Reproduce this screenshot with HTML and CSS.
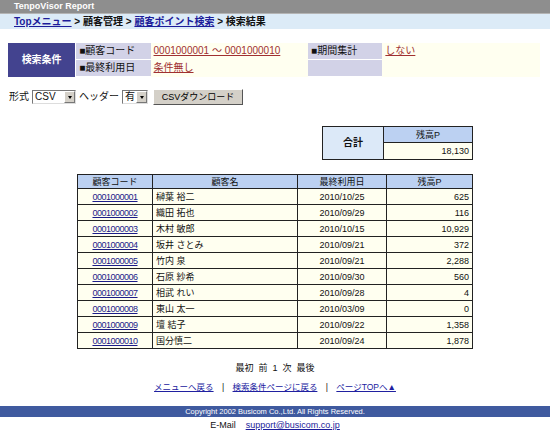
FILE: index.html
```html
<!DOCTYPE html>
<html lang="ja">

<head>
    <meta charset="UTF-8">
    <title>TenpoVisor Report - 検索結果</title>
    <link rel="stylesheet" href="styles.css">
</head>

<body>
    <div class="app-title">TenpoVisor Report</div>
    <div class="crumbs">
        <a href="#">Topメニュー</a> &gt; 顧客管理 &gt; <a href="#">顧客ポイント検索</a> &gt; 検索結果
    </div>

    <div class="page">
        <!-- search condition -->
        <table class="cond">
            <tr>
                <th rowspan="2" class="cond-head">検索条件</th>
                <td class="cond-label">■顧客コード</td>
                <td class="cond-value"><a href="#">0001000001 ～ 0001000010</a></td>
                <td class="cond-label">■期間集計</td>
                <td class="cond-value"><a href="#">しない</a></td>
            </tr>
            <tr>
                <td class="cond-label">■最終利用日</td>
                <td class="cond-value"><a href="#">条件無し</a></td>
                <td class="cond-label"></td>
                <td class="cond-value"></td>
            </tr>
        </table>

        <form class="export">
            <span>形式</span>
            <span class="fake-select sel-format">CSV<i class="arrow"></i></span>
            <span>ヘッダー</span>
            <span class="fake-select sel-header">有<i class="arrow"></i></span>
            <button type="button" class="csv-btn">CSVダウンロード</button>
        </form>

        <div class="tables">
            <table class="grid total">
                <tr>
                    <th rowspan="2" class="total-head">合計</th>
                    <th class="col-pt">残高P</th>
                </tr>
                <tr>
                    <td class="num">18,130</td>
                </tr>
            </table>

            <table class="grid list">
                <tr>
                    <th class="col-code">顧客コード</th>
                    <th class="col-name">顧客名</th>
                    <th class="col-date">最終利用日</th>
                    <th class="col-pt">残高P</th>
                </tr>
                <tr><td class="code"><a href="#">0001000001</a></td><td>榊葉 裕二</td><td class="date">2010/10/25</td><td class="num">625</td></tr>
                <tr><td class="code"><a href="#">0001000002</a></td><td>織田 拓也</td><td class="date">2010/09/29</td><td class="num">116</td></tr>
                <tr><td class="code"><a href="#">0001000003</a></td><td>木村 敏郎</td><td class="date">2010/10/15</td><td class="num">10,929</td></tr>
                <tr><td class="code"><a href="#">0001000004</a></td><td>坂井 さとみ</td><td class="date">2010/09/21</td><td class="num">372</td></tr>
                <tr><td class="code"><a href="#">0001000005</a></td><td>竹内 泉</td><td class="date">2010/09/21</td><td class="num">2,288</td></tr>
                <tr><td class="code"><a href="#">0001000006</a></td><td>石原 紗希</td><td class="date">2010/09/30</td><td class="num">560</td></tr>
                <tr><td class="code"><a href="#">0001000007</a></td><td>相武 れい</td><td class="date">2010/09/28</td><td class="num">4</td></tr>
                <tr><td class="code"><a href="#">0001000008</a></td><td>東山 太一</td><td class="date">2010/03/09</td><td class="num">0</td></tr>
                <tr><td class="code"><a href="#">0001000009</a></td><td>壇 結子</td><td class="date">2010/09/22</td><td class="num">1,358</td></tr>
                <tr><td class="code"><a href="#">0001000010</a></td><td>国分慎二</td><td class="date">2010/09/24</td><td class="num">1,878</td></tr>
            </table>
        </div>

        <p class="pager">最初&nbsp; 前&nbsp; 1&nbsp; 次&nbsp; 最後</p>

        <p class="back-links">
            <a href="#">メニューへ戻る</a>
            <span class="sep">|</span>
            <a href="#">検索条件ページに戻る</a>
            <span class="sep">|</span>
            <a href="#">ページTOPへ▲</a>
        </p>
    </div>

    <div class="copyright">Copyright 2002 Busicom Co.,Ltd. All Rights Reserved.</div>
    <div class="mail">E-Mail&nbsp;&nbsp;&nbsp; <a href="#">support@busicom.co.jp</a></div>
</body>

</html>
```

FILE: styles.css
```css
body {
    margin: 0;
    font-family: "Liberation Sans", "Noto Sans CJK JP", sans-serif;
    font-size: 9px;
    line-height: 12px;
    color: #111;
    background-color: #fff;
}

a {
    color: #1c1c8a;
}

.app-title {
    height: 13px;
    line-height: 13px;
    padding-left: 14px;
    background-color: #8e8e8e;
    border-bottom: 1px solid #b4b4b4;
    color: #fff;
    font-weight: bold;
    font-size: 9px;
}

.crumbs {
    height: 15px;
    line-height: 15px;
    padding-left: 14px;
    background-color: #dcebf7;
    font-weight: bold;
    font-size: 10px;
}

.crumbs a {
    color: #1c1c9a;
}

.page {
    padding: 14px 8px 0;
}

/* search condition */
.cond {
    width: 532px;
    border-collapse: collapse;
    background-color: #fffff0;
}

.cond td,
.cond th {
    height: 16px;
    padding: 0 3px;
    font-size: 10px;
    line-height: 12px;
}

.cond-head {
    width: 61px;
    background-color: #43438f;
    color: #fff;
    border-right: 1px solid #fff;
}

.cond-label {
    width: 68px;
    background-color: #d2d2e7;
    border-bottom: 1px solid #fff;
}

.cond-value {
    width: 151px;
}

.cond-value a {
    color: #a03030;
}

/* export row */
.export {
    display: flex;
    align-items: center;
    gap: 3px;
    margin: 12px 0 0 1px;
    height: 16px;
    font-size: 10px;
}

.fake-select {
    position: relative;
    box-sizing: border-box;
    height: 14px;
    line-height: 12px;
    padding-left: 2px;
    border: 1px solid #777;
    border-right-color: #ddd;
    border-bottom-color: #ddd;
    background-color: #fff;
    font-size: 10px;
}

.sel-format {
    width: 44px;
}

.sel-header {
    width: 26px;
}

.arrow {
    position: absolute;
    right: 0;
    top: 0;
    width: 11px;
    height: 12px;
    background-color: #d4d0c8;
    box-sizing: border-box;
    border: 1px solid #fff;
    border-right-color: #777;
    border-bottom-color: #777;
}

.arrow::after {
    content: "";
    position: absolute;
    left: 3px;
    top: 4px;
    border: 2px solid transparent;
    border-top: 3px solid #000;
    border-bottom: 0;
}

.csv-btn {
    width: 90px;
    height: 16px;
    margin-left: 2px;
    padding: 0;
    font-family: inherit;
    font-size: 9px;
    line-height: 12px;
    background-color: #d4d0c8;
    border: 1px solid #fff;
    border-right-color: #555;
    border-bottom-color: #555;
}

/* result tables */
.tables {
    width: 396px;
    margin: 21px auto 0;
    display: flex;
    flex-direction: column;
    align-items: flex-end;
    gap: 14px;
}

.grid {
    border-collapse: collapse;
    background-color: #fffff0;
}

.grid th,
.grid td {
    border: 1px solid #222;
    height: 15px;
    padding: 0 3px;
    font-weight: normal;
}

.grid th {
    background-color: #bcd1f2;
    text-align: center;
}

.list th {
    height: 13px;
}

.total {
    width: 151px;
}

.total .total-head {
    width: 54px;
    background-color: #dce9f8;
    font-weight: bold;
    font-size: 10px;
}

.total td {
    height: 16px;
}

.list {
    width: 396px;
}

.col-code {
    width: 68px;
}

.col-name {
    width: 138px;
}

.col-date {
    width: 82px;
}

.code,
.date {
    text-align: center;
}

.code a {
    letter-spacing: -0.5px;
}

.num {
    text-align: right;
}

.pager {
    margin: 13px 0 0;
    text-align: center;
}

.back-links {
    margin: 7px 0 0;
    text-align: center;
    font-size: 8.5px;
}

.back-links a {
    color: #2020a0;
}

.sep {
    margin: 0 6px;
}

.copyright {
    margin-top: 13px;
    height: 11px;
    line-height: 11px;
    background-color: #3f5a9f;
    color: #fff;
    text-align: center;
    font-size: 7.5px;
}

.mail {
    margin-top: 2px;
    text-align: center;
}

.mail a {
    color: #1c1c9a;
}
```
